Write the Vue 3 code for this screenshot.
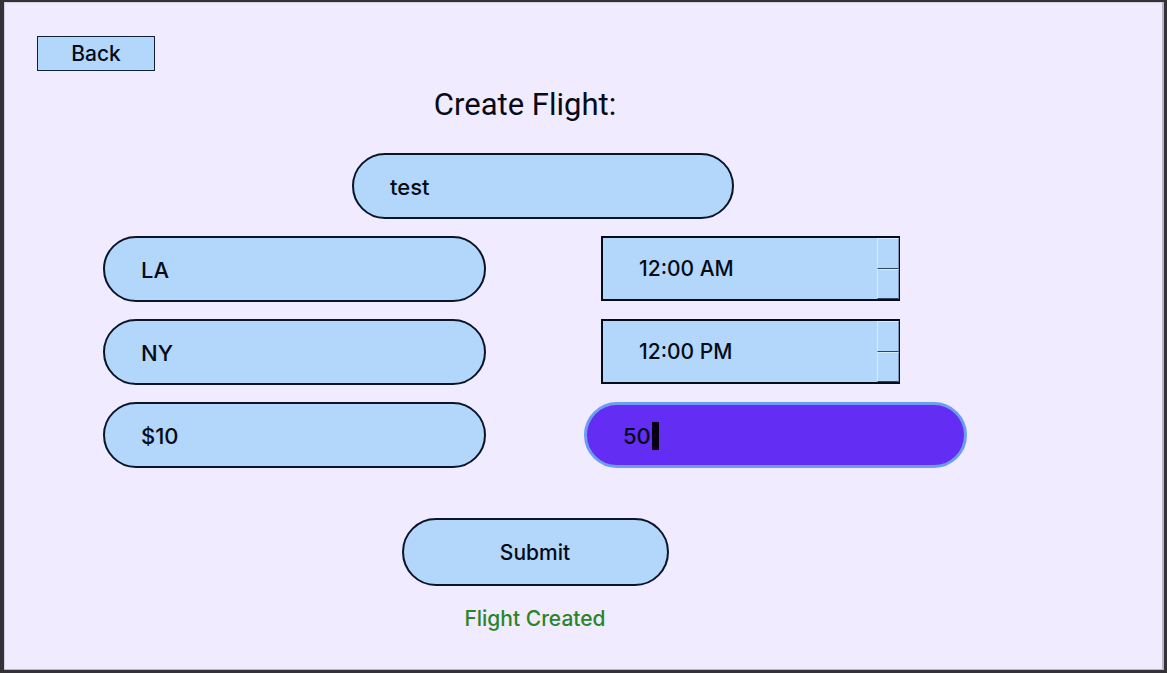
<script setup>
import { ref } from 'vue'

const name = ref('test')
const origin = ref('LA')
const destination = ref('NY')
const price = ref('$10')
const seats = ref('50')
const departure = ref('12:00 AM')
const arrival = ref('12:00 PM')
const message = ref('Flight Created')
</script>

<template>
  <main class="page">
    <button type="button" class="back">Back</button>
    <form class="form" @submit.prevent>
      <h1 class="title">Create Flight:</h1>
      <div class="name-row">
        <input v-model="name" class="field" type="text" aria-label="Name" />
      </div>
      <div class="grid">
        <input v-model="origin" class="field" type="text" aria-label="Origin" />
        <div class="time">
          <input v-model="departure" class="time-input" type="text" aria-label="Departure time" />
          <div class="spinner">
            <button type="button" class="step" aria-label="Later departure"></button>
            <button type="button" class="step" aria-label="Earlier departure"></button>
          </div>
        </div>
        <input v-model="destination" class="field" type="text" aria-label="Destination" />
        <div class="time">
          <input v-model="arrival" class="time-input" type="text" aria-label="Arrival time" />
          <div class="spinner">
            <button type="button" class="step" aria-label="Later arrival"></button>
            <button type="button" class="step" aria-label="Earlier arrival"></button>
          </div>
        </div>
        <input v-model="price" class="field" type="text" aria-label="Price" />
        <div class="active-wrap">
          <input v-model="seats" class="field active" type="text" aria-label="Seats" />
          <span class="caret"></span>
        </div>
      </div>
      <button type="submit" class="submit">Submit</button>
      <p class="message" role="status">{{ message }}</p>
    </form>
  </main>
</template>

<style>
body {
  background: #343236;
}
</style>

<style scoped>
.page {
  box-sizing: border-box;
  min-height: 100vh;
  padding: 34px 197px 0 99px;
  border: solid #343236;
  border-width: 2px 3px 3px 4px;
  background: #f0ebfe;
  box-shadow: inset -2px -1px #b9b5c6, inset 1px 1px #d5d0e0;
  font-family: Inter, "Liberation Sans", sans-serif;
  font-size: 21px;
  font-weight: 500;
  color: #060b18;
}

button,
input {
  box-sizing: border-box;
  margin: 0;
  font: inherit;
  color: inherit;
  background: #b3d6fb;
  border-radius: 0;
  outline: none;
}

.back {
  display: block;
  width: 118px;
  height: 35px;
  margin-left: -66px;
  padding: 0;
  border: 1px solid #10213c;
}

.form {
  display: flex;
  flex-direction: column;
  align-items: center;
}

.title {
  margin: 14px 0 28px;
  padding-right: 20px;
  font-family: Roboto, sans-serif;
  font-size: 31px;
  font-weight: 400;
  line-height: 40px;
}

.name-row {
  width: 382px;
  padding-left: 16px;
}

.grid {
  display: grid;
  grid-template-columns: repeat(2, minmax(0, 1fr));
  gap: 17px 98px;
  width: 100%;
  margin-top: 17px;
}

.field {
  display: block;
  width: 100%;
  height: 66px;
  padding: 2px 36px 0;
  border: 2px solid #0b1528;
  border-radius: 33px;
  font-size: 22px;
}

.time {
  display: flex;
  height: 65px;
  margin: 0 67px 0 17px;
  box-sizing: border-box;
  border: 2px solid #060b18;
  border-right-width: 1px;
}

.time-input {
  flex: 1;
  min-width: 0;
  padding: 0 36px;
  border: 0;
}

.spinner {
  display: flex;
  flex-direction: column;
  width: 22px;
}

.step {
  flex: 1;
  padding: 0;
  border: 1px solid #d5ebff;
  border-right-color: #7b96b5;
  border-bottom-color: #304762;
}

.active-wrap {
  position: relative;
}

.active {
  border: 3px solid #6d9df3;
  background: #632df3;
}

.caret {
  position: absolute;
  left: 68px;
  top: 20px;
  width: 7px;
  height: 28px;
  background: #060010;
}

.submit {
  width: 267px;
  height: 68px;
  margin-top: 50px;
  padding: 0;
  border: 2px solid #0b1528;
  border-radius: 34px;
}

.message {
  margin: 19px 0 0;
  line-height: 28px;
  color: #2b8428;
}
</style>
